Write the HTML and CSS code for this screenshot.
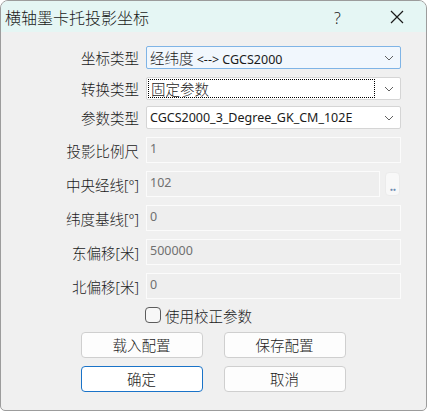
FILE: index.html
```html
<!DOCTYPE html>
<html lang="zh-CN">
<head>
    <meta charset="UTF-8">
    <title>横轴墨卡托投影坐标</title>
    <link rel="stylesheet" href="styles.css">
</head>
<body>
    <div class="window">
        <div class="titlebar">
            <span class="title">横轴墨卡托投影坐标</span>
            <span class="help">?</span>
            <span class="close">
                <svg width="14" height="14" viewBox="0 0 14 14"><path d="M1 1 L13 13 M13 1 L1 13" stroke="#1a1a1a" stroke-width="1.2" fill="none"/></svg>
            </span>
        </div>

        <div class="content">
            <div class="row combo-row r1">
                <label>坐标类型</label>
                <div class="combo active">
                    <span class="combo-text">经纬度 <span class="latin">&lt;--&gt; CGCS2000</span></span>
                    <svg class="chev" width="10" height="6" viewBox="0 0 10 6"><path d="M1 1 L5 5 L9 1" stroke="#606060" stroke-width="1" fill="none"/></svg>
                </div>
            </div>
            <div class="row combo-row r2">
                <label>转换类型</label>
                <div class="combo">
                    <span class="combo-text focus">固定参数</span>
                    <svg class="chev" width="10" height="6" viewBox="0 0 10 6"><path d="M1 1 L5 5 L9 1" stroke="#606060" stroke-width="1" fill="none"/></svg>
                </div>
            </div>
            <div class="row combo-row r3">
                <label>参数类型</label>
                <div class="combo">
                    <span class="combo-text latin">CGCS2000_3_Degree_GK_CM_102E</span>
                    <svg class="chev" width="10" height="6" viewBox="0 0 10 6"><path d="M1 1 L5 5 L9 1" stroke="#606060" stroke-width="1" fill="none"/></svg>
                </div>
            </div>

            <div class="row input-row">
                <label>投影比例尺</label>
                <div class="field">1</div>
            </div>
            <div class="row input-row">
                <label>中央经线<span class="unit">[°]</span></label>
                <div class="field short">102</div>
                <div class="dots-btn">..</div>
            </div>
            <div class="row input-row">
                <label>纬度基线<span class="unit">[°]</span></label>
                <div class="field">0</div>
            </div>
            <div class="row input-row">
                <label>东偏移<span class="unit">[</span>米<span class="unit">]</span></label>
                <div class="field">500000</div>
            </div>
            <div class="row input-row">
                <label>北偏移<span class="unit">[</span>米<span class="unit">]</span></label>
                <div class="field">0</div>
            </div>

            <div class="check-row">
                <span class="checkbox"></span>
                <span>使用校正参数</span>
            </div>

            <div class="btn-row">
                <div class="btn">载入配置</div>
                <div class="btn">保存配置</div>
            </div>
            <div class="btn-row last">
                <div class="btn default">确定</div>
                <div class="btn">取消</div>
            </div>
        </div>
    </div>
</body>
</html>
```

FILE: styles.css
```css
html, body {
    margin: 0;
    padding: 0;
    background: #ffffff;
}
body {
    font-family: "Noto Sans CJK SC", "Noto Sans", sans-serif;
    font-weight: 300;
    color: #1a1a1a;
}
.window {
    width: 427px;
    height: 411px;
    box-sizing: border-box;
    border: 1px solid #9c9c9c;
    border-radius: 8px 8px 5px 5px;
    background: #f0f0f0;
    overflow: hidden;
    display: flex;
    flex-direction: column;
}
.titlebar {
    height: 31px;
    background: #e5f6f4;
    display: flex;
    align-items: center;
    position: relative;
}
.title {
    font-size: 16px;
    margin-left: 4px;
    line-height: 1;
}
.help {
    position: absolute;
    left: 333px;
    top: 6px;
    font-family: "Noto Sans", sans-serif;
    font-size: 16px;
}
.close {
    position: absolute;
    left: 389px;
    top: 9px;
    line-height: 0;
}

.content {
    padding-top: 14px;
    display: flex;
    flex-direction: column;
}
.row {
    display: flex;
    align-items: center;
}
.row label {
    width: 138px;
    text-align: right;
    font-size: 14.5px;
    margin-right: 7px;
    white-space: nowrap;
}
.unit {
    font-family: "Noto Sans", sans-serif;
    font-size: 14px;
}
.combo-row {
    height: 23px;
    margin-bottom: 8px;
}
.combo-row.r2 {
    margin-bottom: 6px;
}
.input-row {
    height: 26px;
    margin-bottom: 8px;
}
.input-row:last-of-type {
    margin-bottom: 9px;
}

.combo {
    width: 255px;
    height: 23px;
    box-sizing: border-box;
    border: 1px solid #d5d5d5;
    border-radius: 2px;
    background: #ffffff;
    display: flex;
    align-items: center;
    position: relative;
}
.combo.active {
    border-color: #7fb4e6;
    background: #f1f7fd;
}
.combo-text {
    margin-left: 3px;
    font-size: 14.5px;
    white-space: nowrap;
}
.combo-text.focus {
    margin-left: 1px;
    padding-left: 2px;
    width: 227px;
    height: 19px;
    line-height: 17px;
    box-sizing: border-box;
    border: 1px dotted #000;
}
.latin {
    font-family: "Noto Sans", sans-serif;
    font-weight: 400;
    font-size: 12.5px;
}
.chev {
    position: absolute;
    right: 6px;
    top: 8px;
}

.field {
    width: 255px;
    height: 26px;
    box-sizing: border-box;
    border: 1px solid #fbfbfb;
    background: #eeeeee;
    color: #707070;
    font-family: "Noto Sans", sans-serif;
    font-weight: 400;
    font-size: 12.5px;
    padding-left: 3px;
    line-height: 22px;
}
.field.short {
    width: 234px;
}
.dots-btn {
    margin-left: 5px;
    width: 15px;
    height: 24px;
    box-sizing: border-box;
    border: 1px solid #ebebeb;
    border-radius: 4px;
    background: #f8f8f8;
    color: #6d8cb2;
    font-size: 12px;
    font-weight: bold;
    text-align: center;
    line-height: 26px;
    letter-spacing: -1px;
}

.check-row {
    display: flex;
    align-items: center;
    height: 16px;
    margin-left: 144px;
    font-size: 14.5px;
    margin-bottom: 9px;
}
.checkbox {
    width: 16px;
    height: 16px;
    box-sizing: border-box;
    border: 1px solid #5c5c5c;
    border-radius: 4px;
    background: #f7f7f7;
    margin-right: 4px;
}

.btn-row {
    display: flex;
    justify-content: center;
    gap: 21px;
    margin-bottom: 8px;
    padding-right: 1px;
}
.btn {
    width: 122px;
    height: 26px;
    box-sizing: border-box;
    border: 1px solid #cfcfcf;
    border-radius: 4px;
    background: #fdfdfd;
    font-size: 14.5px;
    text-align: center;
    line-height: 23px;
}
.btn.default {
    border-color: #1a73c8;
    background: #ffffff;
}
```
